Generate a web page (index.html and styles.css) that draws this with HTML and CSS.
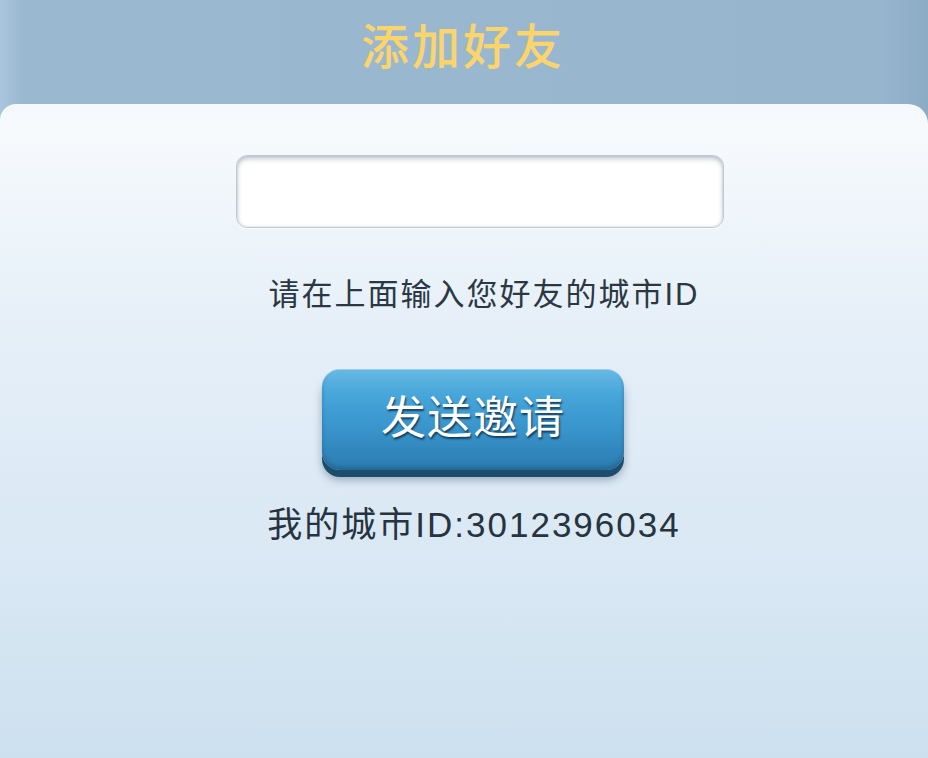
FILE: index.html
```html
<!DOCTYPE html>
<html lang="zh">
<head>
<meta charset="utf-8">
<title>添加好友</title>
<link rel="stylesheet" href="styles.css">
</head>
<body>
<div class="app">
  <header class="topbar">
    <h1 class="title">添加好友</h1>
  </header>
  <main class="panel">
    <input class="id-input" type="text" aria-label="城市ID">
    <p class="hint">请在上面输入您好友的城市ID</p>
    <button class="send-btn" type="button">发送邀请</button>
    <p class="my-id">我的城市ID:3012396034</p>
  </main>
</div>
</body>
</html>
```

FILE: styles.css
```css
html, body {
  margin: 0;
  padding: 0;
  height: 100%;
}
body {
  font-family: "Liberation Sans", "Noto Sans CJK SC", sans-serif;
  overflow: hidden;
}
.app {
  display: flex;
  flex-direction: column;
  height: 758px;
  background: linear-gradient(to right, #a9c6dd 0px, #9bb8d1 22px, #9ab7d0 50%, #98b5ce 880px, #8cabc5 928px);
}
.topbar {
  height: 104px;
  flex: none;
  display: flex;
  align-items: center;
  justify-content: center;
}
.title {
  margin: 0 0 18px -2px;
  font-family: "Noto Sans CJK SC", sans-serif;
  font-weight: 500;
  font-size: 48px;
  letter-spacing: 3px;
  line-height: 60px;
  color: #fbd46c;
}
.panel {
  flex: 1;
  display: flex;
  flex-direction: column;
  align-items: center;
  border-radius: 16px 20px 0 0;
  background: linear-gradient(to bottom, #f4f8fc 0px, #f7fafd 24px, #edf4fa 130px, #e4eef8 250px, #d9e8f4 460px, #cde0ef 654px);
}
.id-input {
  box-sizing: border-box;
  margin: 51px 0 0 32px;
  width: 488px;
  height: 73px;
  border: 1px solid #bccad6;
  border-radius: 11px;
  background: #ffffff;
  box-shadow: inset 0 3px 5px rgba(60, 80, 100, 0.3), inset 0 0 3px rgba(60, 80, 100, 0.2), 0 1px 0 rgba(255, 255, 255, 0.8);
  outline: none;
  font-size: 30px;
  padding: 0 14px;
}
.hint {
  margin: 47px 0 0 40px;
  font-size: 31px;
  line-height: 40px;
  letter-spacing: 2px;
  color: #2b3844;
}
.send-btn {
  box-sizing: border-box;
  margin: 54px 0 0 18px;
  width: 302px;
  height: 101px;
  border: none;
  border-radius: 18px;
  padding: 0 0 10px;
  background: linear-gradient(to bottom, #68b9e4 0%, #47a6da 25%, #3894cb 60%, #2b7cb0 100%);
  box-shadow: inset 0 1px 0 rgba(255, 255, 255, 0.35), inset 0 -3px 4px rgba(20, 60, 90, 0.35), 0 7px 0 #1d4d6d, 0 10px 8px rgba(20, 50, 80, 0.35);
  font-family: "Noto Sans CJK SC", sans-serif;
  font-weight: 400;
  font-size: 45px;
  letter-spacing: 1px;
  color: #ffffff;
  text-shadow: 1px 2px 2px rgba(10, 30, 50, 0.75);
  cursor: pointer;
}
.my-id {
  margin: 33px 0 0 20px;
  font-size: 35px;
  line-height: 44px;
  letter-spacing: 2px;
  color: #27333f;
}
```
